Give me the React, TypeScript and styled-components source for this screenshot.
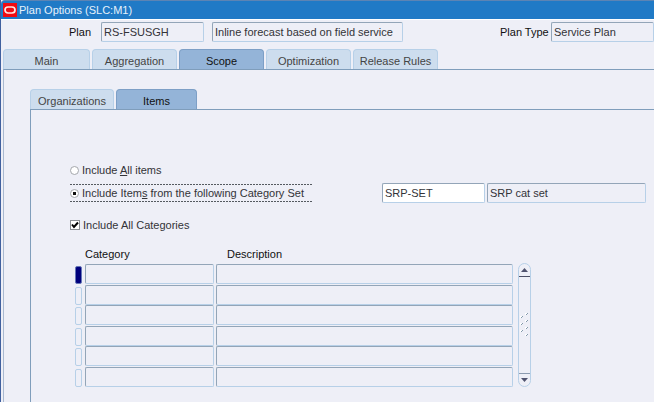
import React, { useState } from "react";
import styled, { createGlobalStyle, css } from "styled-components";

const c = {
  bg: "#eeeff7",
  line: "#7f9dbb",
  soft: "#b7d0e8",
  tab: "#cdddee",
  tabOn: "#94b4d8",
  text: "#333338",
};

const Global = createGlobalStyle`
  * { box-sizing: border-box; }
  body { margin: 0; background: ${c.bg}; }
  body, input, button { font-family: "Liberation Sans", Arial, sans-serif; font-size: 11px; color: ${c.text}; }
`;

const Window = styled.div`
  display: flex;
  flex-direction: column;
  min-height: 100vh;
  overflow: hidden;
  border-left: 1px solid #40609f;
  background: ${c.bg};
`;

const TitleBar = styled.header`
  display: flex;
  align-items: center;
  gap: 2px;
  height: 20px;
  padding-left: 2px;
  border-top: 1px solid #5c84b4;
  border-bottom: 1px solid #fff;
  border-top-left-radius: 4px;
  background: #207ac6;
  color: #e6f1fb;
  white-space: nowrap;
`;

const Title = styled.h1`
  margin: 0;
  font-size: 11px;
  font-weight: normal;
`;

const PlanBar = styled.div`
  display: flex;
  align-items: center;
  height: 22px;
  margin-top: 1px;
  padding-left: 68px;
`;

const FieldLabel = styled.label<{ $width: number; $gapBefore?: boolean }>`
  flex: none;
  width: ${(p) => p.$width}px;
  margin-left: ${(p) => (p.$gapBefore ? "auto" : "0")};
  color: #111;
  white-space: nowrap;
`;

const Field = styled.input<{ $width?: number; $gap?: number; $editable?: boolean }>`
  flex: ${(p) => (p.$width ? "none" : "1")};
  width: ${(p) => (p.$width ? `${p.$width}px` : "100%")};
  min-width: 0;
  height: 20px;
  margin: 0 0 0 ${(p) => p.$gap ?? 0}px;
  padding: 0 2px;
  border: 1px solid;
  border-color: #93a5b8 ${c.soft} ${c.soft} #93a5b8;
  border-radius: 2px;
  outline: none;
  background: ${(p) => (p.$editable ? "#fff" : c.bg)};
`;

const TabList = styled.div<{ $level: "main" | "sub" }>`
  display: flex;
  gap: 2px;
  ${(p) =>
    p.$level === "main"
      ? css`margin: 6px 0 0 2px;`
      : css`margin: 19px 0 0 26px;`}
`;

const Tab = styled.button<{ $width: number; $on?: boolean }>`
  width: ${(p) => p.$width}px;
  height: 20px;
  padding: 3px 0 0;
  border: 1px solid ${(p) => (p.$on ? "#7d9fc6" : c.soft)};
  border-bottom: 0;
  border-radius: 4px 4px 0 0;
  background: ${(p) => (p.$on ? c.tabOn : c.tab)};
  color: ${(p) => (p.$on ? "#111" : "#444")};
  white-space: nowrap;
`;

const Panel = styled.section<{ $level: "main" | "sub" }>`
  display: flex;
  flex: 1;
  flex-direction: column;
  border-top: 1px solid ${c.line};
  border-left: 1px solid ${(p) => (p.$level === "main" ? "#a9b9d0" : c.line)};
  ${(p) =>
    p.$level === "main"
      ? css`margin-left: 2px;`
      : css`
          margin-left: 26px;
          padding: 51px 8px 13px 39px;
        `}
`;

const dashes = "repeating-linear-gradient(90deg, #555a60 0 2px, transparent 2px 3px)";

const Choice = styled.label<{ $focused?: boolean }>`
  display: flex;
  align-items: center;
  gap: 3px;
  height: 18px;
  white-space: nowrap;
  ${(p) =>
    p.$focused &&
    css`
      min-width: 242px;
      background: ${dashes} top / 100% 1px no-repeat, ${dashes} bottom / 100% 1px no-repeat;
    `}
`;

const Radio = styled.input`
  appearance: none;
  display: grid;
  flex: none;
  place-items: center;
  width: 9px;
  height: 9px;
  margin: 0;
  border: 1px solid #a4a7ac;
  border-radius: 50%;
  background: #fff;
  &:checked::before {
    content: "";
    width: 3px;
    height: 3px;
    background: #111;
  }
`;

const CheckWrap = styled.span`
  display: grid;
  > * { grid-area: 1 / 1; }
`;

const CheckInput = styled.input`
  appearance: none;
  width: 10px;
  height: 10px;
  margin: 0;
  border: 1px solid #8b8e94;
  background: #fff;
  &:not(:checked) + svg { visibility: hidden; }
`;

const SetRow = styled.div`
  display: flex;
  align-items: center;
  height: 20px;
  margin: 4px 0 13px;
`;

const SetFields = styled.div`
  display: flex;
  flex: 1;
  gap: 2px;
  margin-left: 70px;
`;

const Categories = styled.div`
  display: flex;
  gap: 5px;
  margin: 11px 115px 0 5px;
`;

const Grid = styled.table`
  flex: 1;
  border-collapse: collapse;
  table-layout: fixed;
  th, td { padding: 0; vertical-align: top; }
  th {
    height: 19px;
    color: #111;
    font-weight: normal;
    line-height: 18px;
    text-align: left;
  }
  tbody tr { height: 21px; }
  tbody tr:nth-child(2n) { height: 20px; }
  input { display: block; }
`;

const Heading = styled.span<{ $inset?: boolean }>`
  padding-left: ${(p) => (p.$inset ? 11 : 0)}px;
`;

const Marker = styled.button<{ $current?: boolean }>`
  display: block;
  width: 7px;
  height: 18px;
  margin-top: 2px;
  padding: 0;
  border: 1px solid ${(p) => (p.$current ? "#6676b8" : c.soft)};
  border-radius: 2px;
  background: ${(p) => (p.$current ? "#00007c" : c.bg)};
`;

const Scroller = styled.div`
  display: flex;
  flex: none;
  flex-direction: column;
  width: 13px;
  margin-top: 18px;
  border: 1px solid ${c.soft};
  border-radius: 7px;
`;

const Arrow = styled.button`
  display: grid;
  place-items: center;
  height: 12px;
  padding: 0;
  border: 0;
  background: none;
`;

const Thumb = styled.div`
  display: grid;
  flex: 1;
  place-items: center;
  border-top: 1px solid #4c4f66;
  border-bottom: 1px solid #8c9bb0;
`;

const mainTabs = [
  { name: "Main", width: 87 },
  { name: "Aggregation", width: 85 },
  { name: "Scope", width: 85 },
  { name: "Optimization", width: 85 },
  { name: "Release Rules", width: 85 },
];
const subTabs = [
  { name: "Organizations", width: 84 },
  { name: "Items", width: 81 },
];
const rows = [0, 1, 2, 3, 4, 5];
const gripDots = [[6, 0], [1, 3], [6, 7], [1, 10], [6, 14], [1, 17], [6, 21]];

function Logo() {
  return (
    <svg width="14" height="14" viewBox="0 0 14 14" aria-hidden="true">
      <rect width="14" height="14" fill="#f00b12" />
      <rect x="2" y="4" width="10" height="6" rx="3" fill="none" stroke="#fde8e4" strokeWidth="1.7" />
    </svg>
  );
}

export default function App() {
  const [scope, setScope] = useState("set");
  const [all, setAll] = useState(true);
  const [current, setCurrent] = useState(0);

  return (
    <>
      <Global />
      <Window>
        <TitleBar>
          <Logo />
          <Title>Plan Options (SLC:M1)</Title>
        </TitleBar>
        <PlanBar>
          <FieldLabel htmlFor="plan" $width={32}>Plan</FieldLabel>
          <Field id="plan" readOnly $width={103} defaultValue="RS-FSUSGH" />
          <Field aria-label="Plan description" readOnly $width={191} $gap={8} defaultValue="Inline forecast based on field service" />
          <FieldLabel htmlFor="type" $width={51} $gapBefore>Plan Type</FieldLabel>
          <Field id="type" readOnly $width={103} defaultValue="Service Plan" />
        </PlanBar>

        <TabList role="tablist" $level="main">
          {mainTabs.map((t) => (
            <Tab key={t.name} type="button" role="tab" aria-selected={t.name === "Scope"} $on={t.name === "Scope"} $width={t.width}>
              {t.name}
            </Tab>
          ))}
        </TabList>
        <Panel $level="main">
          <TabList role="tablist" $level="sub">
            {subTabs.map((t) => (
              <Tab key={t.name} type="button" role="tab" aria-selected={t.name === "Items"} $on={t.name === "Items"} $width={t.width}>
                {t.name}
              </Tab>
            ))}
          </TabList>
          <Panel $level="sub">
            <Choice>
              <Radio type="radio" name="scope" checked={scope === "all"} onChange={() => setScope("all")} />
              <span>Include <u>A</u>ll items</span>
            </Choice>
            <SetRow>
              <Choice $focused>
                <Radio type="radio" name="scope" checked={scope === "set"} onChange={() => setScope("set")} />
                <span>Include Item<u>s</u> from the following Category Set</span>
              </Choice>
              <SetFields>
                <Field aria-label="Category set" $editable $width={103} defaultValue="SRP-SET" />
                <Field aria-label="Category set description" readOnly defaultValue="SRP cat set" />
              </SetFields>
            </SetRow>
            <Choice>
              <CheckWrap>
                <CheckInput id="all-categories" type="checkbox" checked={all} onChange={() => setAll(!all)} />
                <svg width="10" height="10" viewBox="0 0 10 10" aria-hidden="true" pointerEvents="none">
                  <path d="M2 4.5 4 7 8 2.5" fill="none" stroke="#000" strokeWidth="2" />
                </svg>
              </CheckWrap>
              <span>Include All Categories</span>
            </Choice>
            <Categories>
              <Grid>
                <colgroup>
                  <col style={{ width: 10 }} />
                  <col style={{ width: 131 }} />
                  <col />
                </colgroup>
                <thead>
                  <tr>
                    <td />
                    <th scope="col"><Heading>Category</Heading></th>
                    <th scope="col"><Heading $inset>Description</Heading></th>
                  </tr>
                </thead>
                <tbody>
                  {rows.map((r) => (
                    <tr key={r}>
                      <td>
                        <Marker type="button" aria-label={`Row ${r + 1}`} $current={r === current} onClick={() => setCurrent(r)} />
                      </td>
                      <td><Field $width={129} aria-label={`Category ${r + 1}`} onFocus={() => setCurrent(r)} /></td>
                      <td><Field aria-label={`Description ${r + 1}`} readOnly /></td>
                    </tr>
                  ))}
                </tbody>
              </Grid>
              <Scroller>
                <Arrow type="button" aria-label="Scroll up">
                  <svg width="7" height="4" viewBox="0 0 7 4"><path d="M0 4 3.5 0 7 4Z" fill="#50536f" /></svg>
                </Arrow>
                <Thumb>
                  <svg width="9" height="24" viewBox="0 0 9 24" aria-hidden="true">
                    {gripDots.map(([x, y]) => (
                      <g key={y}>
                        <rect x={x - 1} y={y} width="2" height="2" fill="#fff" />
                        <path d={`M${x} ${y + 2}l2-2`} stroke="#8499ac" />
                      </g>
                    ))}
                  </svg>
                </Thumb>
                <Arrow type="button" aria-label="Scroll down">
                  <svg width="7" height="4" viewBox="0 0 7 4"><path d="M0 0 3.5 4 7 0Z" fill="#50536f" /></svg>
                </Arrow>
              </Scroller>
            </Categories>
          </Panel>
        </Panel>
      </Window>
    </>
  );
}
